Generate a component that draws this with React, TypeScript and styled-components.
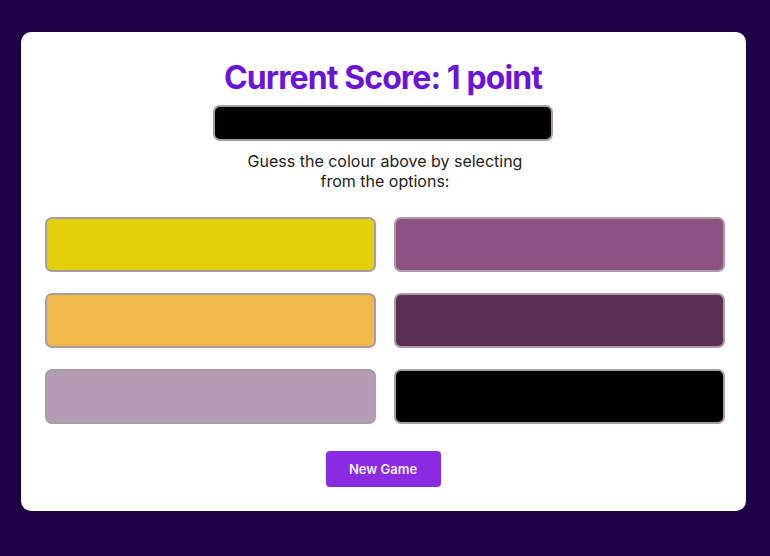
import React from "react";
import styled, { createGlobalStyle } from "styled-components";

const Global = createGlobalStyle`
  html, body { margin: 0; padding: 0; background: #1e0046; }
  body { font-family: Inter, "Noto Sans", sans-serif; }
`;

const Page = styled.div`
  min-height: 556px;
  padding: 32px 24px 45px 21px;
  box-sizing: border-box;
`;

const Card = styled.main`
  background: #ffffff;
  border-radius: 10px;
  padding: 24px 21px 24px 24px;
  display: flex;
  flex-direction: column;
  align-items: center;
`;

const Header = styled.div`
  display: flex;
  flex-direction: column;
  align-items: center;
  margin-right: 4px;
`;

const Title = styled.h1`
  margin: 0;
  font-size: 32px;
  font-weight: 700;
  letter-spacing: -0.9px;
  line-height: 44px;
  color: #6a14d9;
`;

const Target = styled.div<{ $color: string }>`
  width: 340px;
  height: 36px;
  box-sizing: border-box;
  margin-top: 5px;
  background: ${(p) => p.$color};
  border: 2px solid #a89a9a;
  border-radius: 7px;
`;

const Prompt = styled.p`
  margin: 10px 0 0 4px;
  max-width: 290px;
  text-align: center;
  font-size: 16px;
  line-height: 20px;
  color: #222222;
`;

const Options = styled.div`
  align-self: stretch;
  display: grid;
  grid-template-columns: 1fr 1fr;
  column-gap: 18px;
  row-gap: 21px;
  margin-top: 26px;
`;

const Option = styled.button<{ $color: string }>`
  height: 55px;
  box-sizing: border-box;
  background: ${(p) => p.$color};
  border: 2px solid #a99ca3;
  border-radius: 7px;
  padding: 0;
  cursor: pointer;
`;

const NewGame = styled.button`
  margin: 27px 4px 0 0;
  width: 115px;
  height: 36px;
  background: #8a2be2;
  color: #f4eefc;
  border: none;
  border-radius: 4px;
  font-family: Inter, sans-serif;
  font-size: 13px;
  font-weight: 600;
  cursor: pointer;
`;

const colors = ["#e3cf0a", "#8e5184", "#f1b94b", "#5b2f53", "#b39cb4", "#000000"];

export default function App() {
  return (
    <>
      <Global />
      <Page>
        <Card>
          <Header>
            <Title>Current Score: 1 point</Title>
            <Target $color="#000000" />
            <Prompt>Guess the colour above by selecting from the options:</Prompt>
          </Header>
          <Options>
            {colors.map((c) => (
              <Option key={c} $color={c} aria-label={c} />
            ))}
          </Options>
          <NewGame>New Game</NewGame>
        </Card>
      </Page>
    </>
  );
}
